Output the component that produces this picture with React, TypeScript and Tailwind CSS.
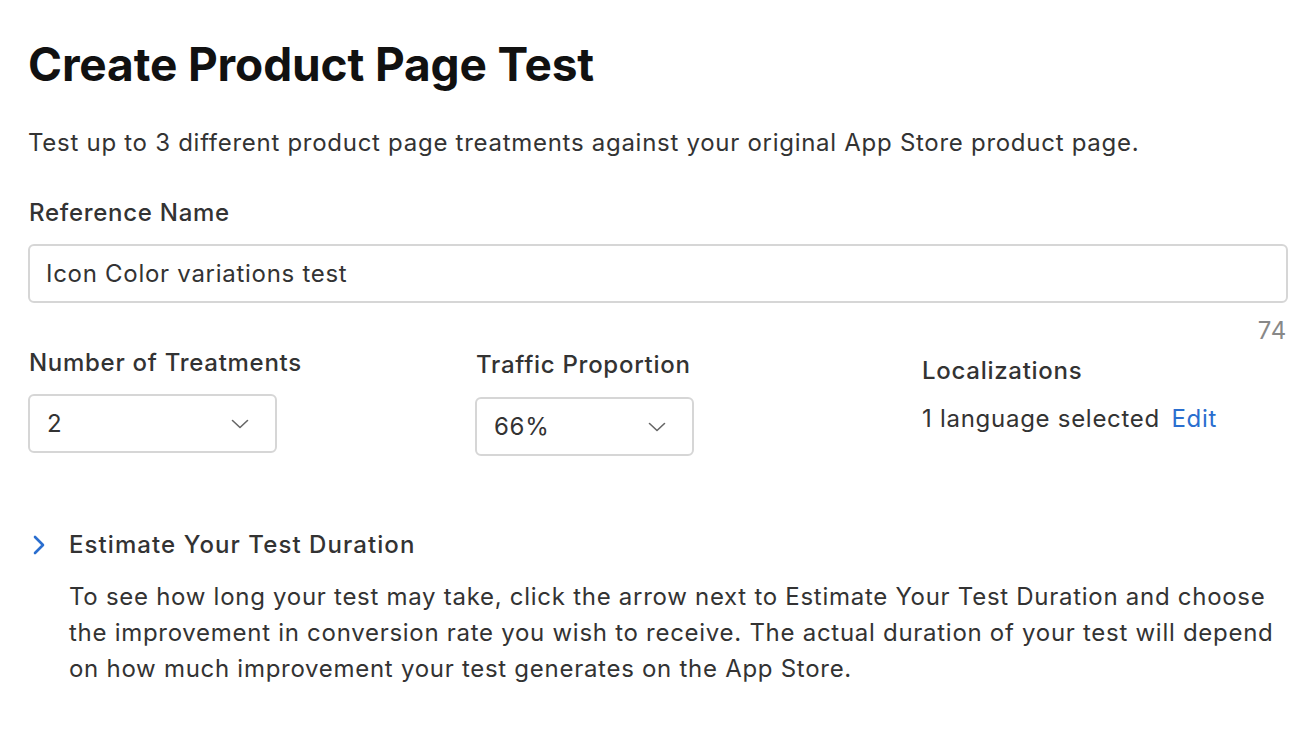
import React from 'react';

const Chevron: React.FC<{ className?: string }> = ({ className }) => (
  <svg viewBox="0 0 18 10" className={className} fill="none" stroke="currentColor" strokeWidth={1.6} strokeLinecap="round" strokeLinejoin="round">
    <path d="M1.5 1.5 9 8.5l7.5-7" />
  </svg>
);

const Select: React.FC<{ value: string; width: string }> = ({ value, width }) => (
  <div className={`flex items-center justify-between h-[59px] rounded-[6px] border-2 border-[#d6d6d6] bg-white pl-[17px] pr-[26px] ${width}`}>
    <span className="text-[24px] tracking-[0.03em] text-[#333]">{value}</span>
    <Chevron className="w-[18px] h-[10px] text-[#666]" />
  </div>
);

export default function App() {
  return (
    <div className="min-h-screen bg-white text-[#333] font-['Inter','Liberation_Sans',sans-serif] pl-[28px] pr-[10px] pt-[36px]">
      <h1 className="text-[46px] leading-[56px] font-bold text-[#111] tracking-[-0.003em]">Create Product Page Test</h1>

      <p className="mt-[36px] text-[24px] leading-[30px] tracking-[0.03em]">
        Test up to 3 different product page treatments against your original App Store product page.
      </p>

      <div className="mt-[40px] text-[24px] tracking-[0.03em]">
        <label className="block leading-[30px] pl-[1px] font-medium">Reference Name</label>
        <div className="mt-[16px] h-[59px] flex items-center rounded-[6px] border-2 border-[#d6d6d6] px-[16px] text-[#333]">
          Icon Color variations test
        </div>
        <div className="text-right leading-[30px] text-[#888] pr-[1px] mt-[13px]">74</div>
      </div>

      <div className="flex mt-[2px] text-[24px] leading-[30px] tracking-[0.03em]">
        <div className="w-[447px]">
          <div className="pl-[1px] font-medium">Number of Treatments</div>
          <div className="mt-[16px]">
            <Select value="2" width="w-[249px]" />
          </div>
        </div>
        <div className="w-[446px] pt-[2px]">
          <div className="pl-[1px] font-medium">Traffic Proportion</div>
          <div className="mt-[17px]">
            <Select value="66%" width="w-[219px]" />
          </div>
        </div>
        <div className="pt-[8px]">
          <div className="pl-[1px] font-medium">Localizations</div>
          <div className="mt-[18px] pl-[1px]">
            1 language selected <a className="ml-[4px] text-[#2a6ecf] cursor-pointer">Edit</a>
          </div>
        </div>
      </div>

      <div className="mt-[74px] text-[24px] tracking-[0.03em]">
        <div className="flex items-center">
          <svg viewBox="0 0 12 20" className="w-[12px] h-[20px] ml-[5px] text-[#2a6ecf]" fill="none" stroke="currentColor" strokeWidth={2.6} strokeLinecap="round" strokeLinejoin="round">
            <path d="M2 2l8 8-8 8" />
          </svg>
          <span className="ml-[24px] leading-[30px] font-medium tracking-[0.045em]">Estimate Your Test Duration</span>
        </div>
        <p className="mt-[19px] ml-[41px] leading-[36px]">
          To see how long your test may take, click the arrow next to Estimate Your Test Duration and choose the improvement in conversion rate you wish to receive. The actual duration of your test will depend on how much improvement your test generates on the App Store.
        </p>
      </div>
    </div>
  );
}
